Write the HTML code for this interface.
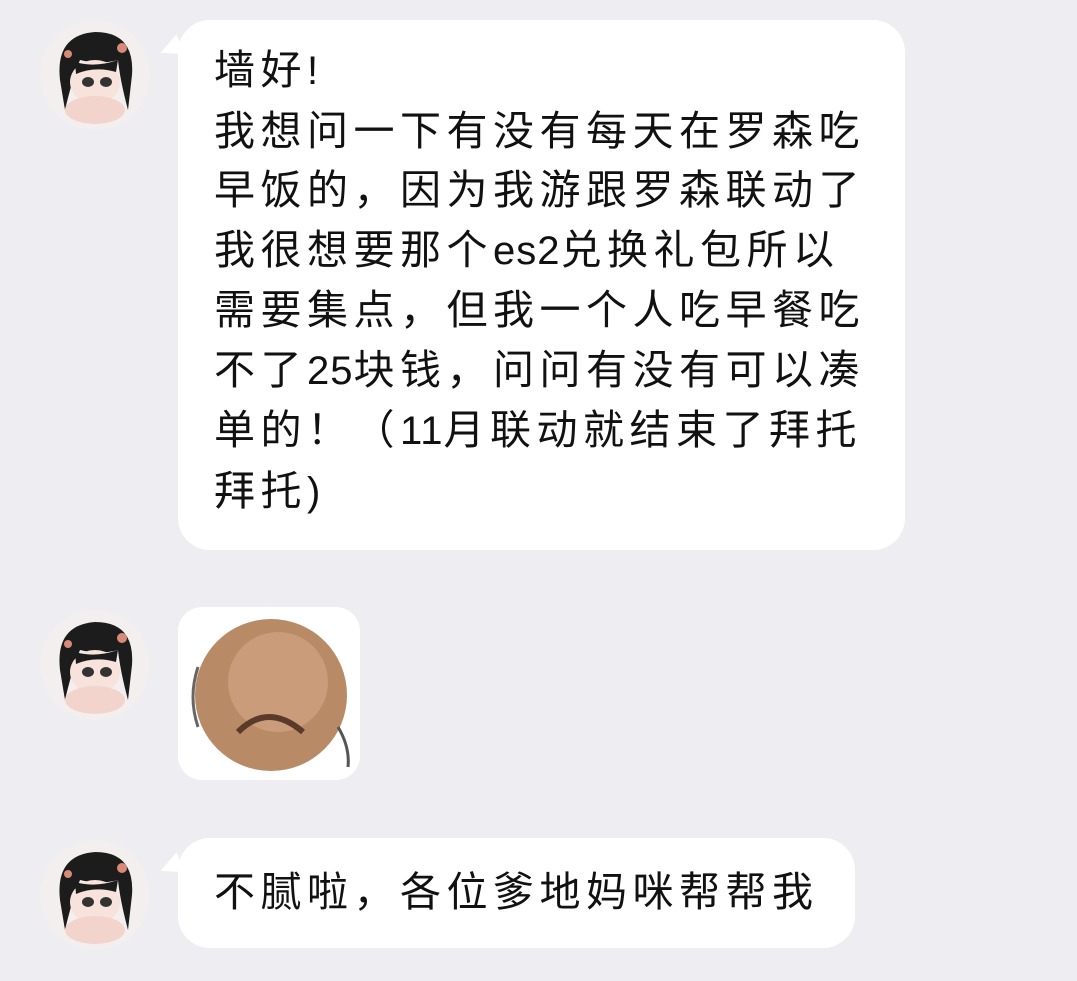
<!DOCTYPE html>
<html><head><meta charset="utf-8"><style>
body{margin:0;width:1077px;height:981px;background:#ededf2;position:relative;overflow:hidden;font-family:"Liberation Sans","Noto Sans CJK SC",sans-serif;color:#111}
.av{position:absolute;left:40px;width:110px;height:110px}
.b{position:absolute;background:#fff;border-radius:32px}
.tail{position:absolute;left:-18px;top:18px;width:0;height:0;border-top:10px solid transparent;border-right:22px solid #fff;border-bottom:12px solid transparent;transform:rotate(-25deg)}
.t{position:absolute;left:36px;font-size:41px;letter-spacing:5.5px;line-height:59.5px;white-space:pre}
.l{letter-spacing:1px;font-size:40px}
</style></head><body>
<svg width="0" height="0" style="position:absolute"><defs>
<g id="a">
<circle cx="55" cy="55" r="55" fill="#f4efef"/>
<clipPath id="c"><circle cx="55" cy="55" r="55"/></clipPath>
<g clip-path="url(#c)">
<path d="M20 60 Q15 15 55 12 Q95 12 92 55 L88 90 Q80 60 78 40 Q60 45 40 40 Q32 60 25 90Z" fill="#1c1c1c"/>
<ellipse cx="55" cy="62" rx="25" ry="22" fill="#f7e2dc"/>
<path d="M35 42 Q55 48 78 40 L76 52 Q55 46 36 54Z" fill="#1c1c1c"/>
<ellipse cx="48" cy="62" rx="6" ry="5" fill="#333"/>
<ellipse cx="66" cy="62" rx="6" ry="5" fill="#333"/>
<ellipse cx="55" cy="90" rx="30" ry="14" fill="#f2d4cc"/>
<circle cx="82" cy="28" r="5" fill="#d88a78"/>
<circle cx="28" cy="34" r="4" fill="#d88a78"/>
</g></g></defs></svg>
<svg class="av" style="top:20px" viewBox="0 0 110 110"><use href="#a"/></svg>
<svg class="av" style="top:610px" viewBox="0 0 110 110"><use href="#a"/></svg>
<svg class="av" style="top:840px" viewBox="0 0 110 110"><use href="#a"/></svg>

<div class="b" style="left:178px;top:20px;width:727px;height:530px"><div class="tail"></div>
<div class="t" style="top:21px">墙好<span class="l">!</span>
我想问一下有没有每天在罗森吃
早饭的，因为我游跟罗森联动了
我很想要那个<span class="l">es2</span>兑换礼包所以
需要集点，但我一个人吃早餐吃
不了<span class="l">25</span>块钱，问问有没有可以凑
单的！（<span class="l">11</span>月联动就结束了拜托
拜托<span class="l">)</span></div></div>

<div class="b" style="left:178px;top:607px;width:182px;height:173px;border-radius:24px">
<svg width="182" height="173" viewBox="0 0 182 173"><circle cx="93" cy="88" r="76" fill="#b98a66"/><circle cx="100" cy="75" r="50" fill="#d6a986" opacity=".6"/><path d="M60 125 Q90 95 125 125" stroke="#5a3a2a" stroke-width="6" fill="none"/><path d="M20 60 Q10 90 20 120" stroke="#666" stroke-width="3" fill="none"/><path d="M160 120 Q172 140 170 160" stroke="#555" stroke-width="3" fill="none"/></svg></div>

<div class="b" style="left:178px;top:838px;width:677px;height:110px"><div class="tail"></div>
<div class="t" style="top:25px">不腻啦，各位爹地妈咪帮帮我</div></div>
</body></html>
